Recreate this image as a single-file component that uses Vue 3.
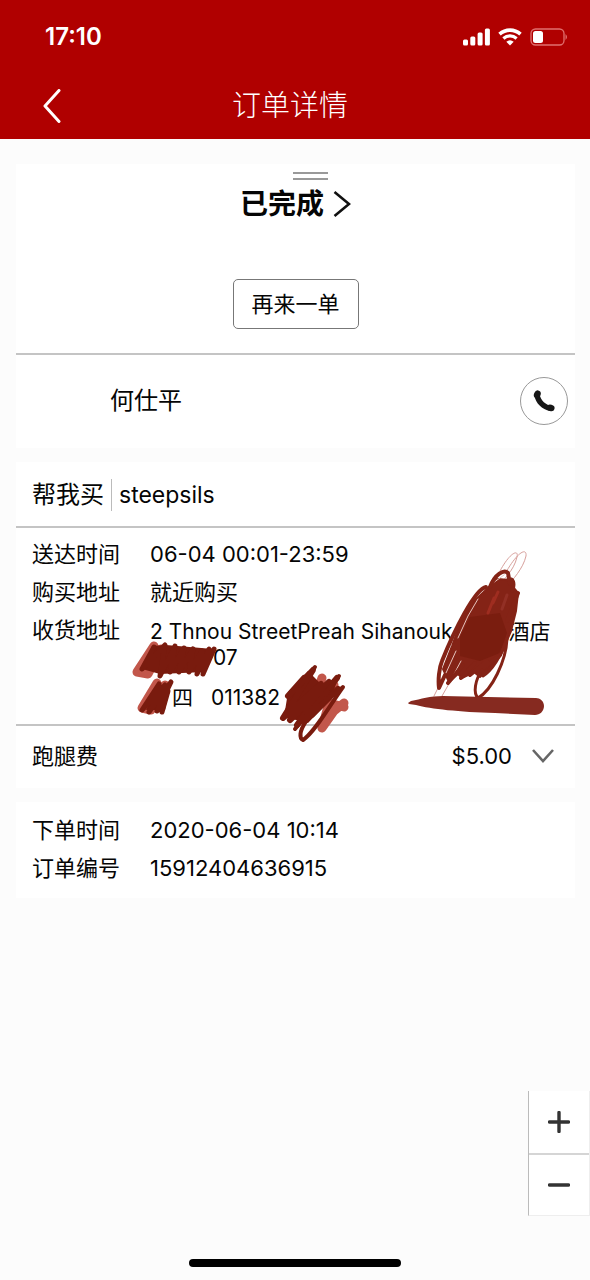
<script setup>
import { ref } from 'vue'

const schedule = [
  { label: '送达时间', value: '06-04 00:01-23:59' },
  { label: '购买地址', value: '就近购买' },
]
const order = [
  { label: '下单时间', value: '2020-06-04 10:14' },
  { label: '订单编号', value: '15912404636915' },
]
const bars = [6, 9, 13, 17]
const zoom = ref(1)
</script>

<template>
  <div class="page">
    <header class="top">
      <div class="status">
        <span class="clock">17:10</span>
        <svg class="signal" viewBox="0 0 28 18" aria-hidden="true">
          <rect v-for="(h, i) in bars" :key="i" :x="i * 7.3" :y="17.5 - h" width="5" :height="h" rx="1.5" fill="#fff" />
        </svg>
        <svg class="wifi" viewBox="0 0 24 18" aria-hidden="true">
          <g fill="none" stroke="#fff">
            <path d="M1.500 6.200C7.500 .7 16.500 .7 22.500 6.200" stroke-width="3.600" />
            <path d="M5.400 10.500C9.200 7.100 14.800 7.100 18.600 10.500" stroke-width="3.200" />
          </g>
          <path d="M8.300 13.800Q12 10.800 15.700 13.800L12 17.600Z" fill="#fff" />
        </svg>
        <svg class="battery" viewBox="0 0 38 18" aria-hidden="true">
          <rect x="1" y="1" width="33" height="16" rx="4.500" fill="none" stroke="#e0706f" stroke-width="1.300" />
          <rect x="3" y="3" width="10" height="12" rx="2.500" fill="#fff" />
          <path d="M35.500 6Q38.500 9 35.500 12Z" fill="#e0706f" />
        </svg>
      </div>
      <nav class="bar">
        <button class="back" type="button" aria-label="返回">
          <svg viewBox="0 0 20 34"><path d="M17 1.500L3 17L17 32.500" fill="none" stroke="#fff" stroke-width="3" stroke-linecap="round" stroke-linejoin="round" /></svg>
        </button>
        <h1>订单详情</h1>
      </nav>
    </header>

    <main>
      <section class="card">
        <div class="state">
          <div class="grip"></div>
          <a class="done" href="#">
            已完成
            <svg viewBox="0 0 18 26"><path d="M1.500 1L16 13L1.500 25" fill="none" stroke="#111" stroke-width="2.600" /></svg>
          </a>
          <button class="again" type="button">再来一单</button>
        </div>
        <div class="courier">
          <span>何仕平</span>
          <button class="call" type="button" aria-label="拨打电话">
            <svg viewBox="0 0 24 24"><g fill="#171717"><path d="M2.500 7C3.500 14 10 20.500 18 22L20 17.500C14 16 8.500 11.500 7.500 5Z" /><ellipse cx="5.300" cy="5.300" rx="3.300" ry="4" transform="rotate(25 5.300 5.300)" /><ellipse cx="18.700" cy="18.900" rx="3.900" ry="3.200" transform="rotate(15 18.700 18.900)" /></g></svg>
          </button>
        </div>
      </section>

      <section class="card">
        <div class="shop">
          <h2>帮我买</h2>
          <span>steepsils</span>
        </div>
        <div class="details">
          <dl>
            <div v-for="row in schedule" :key="row.label" class="row">
              <dt>{{ row.label }}</dt>
              <dd>{{ row.value }}</dd>
            </div>
            <div class="row address">
              <dt>收货地址</dt>
              <dd>
                <p>2 Thnou StreetPreah Sihanouk<i class="gap-hotel"></i>酒店</p>
                <p><i class="gap-room"></i>07</p>
                <p class="contact"><i class="gap-name"></i>四<span>011382</span></p>
              </dd>
            </div>
          </dl>
          <svg class="ink" viewBox="16 527 559 223" aria-hidden="true">
            <g fill="none" stroke-linecap="round" stroke-linejoin="round">
              <g stroke="#c2574b" stroke-width="9">
                <path d="M154 645L137 671L148 673L161 648" />
                <path d="M157 682L142 707L151 709L165 684" />
                <path d="M322 677L314 700M334 684L318 704M344 702L334 710L322 727L329 702L344 706" />
              </g>
              <path d="M152 645L166 644L213 648L204 671L160 673L142 668Z" fill="#791b0e" />
              <path d="M158 683L170 686L165 709L146 709Z" fill="#791b0e" />
              <path d="M308 670L322 684L337 680L331 698L308 722L284 716L288 691Z" fill="#791b0e" />
              <g stroke="#791b0e">
                <path stroke-width="5" d="M154 646L142 668L165 644L160 675L175 645L170 671L184 647L179 671L193 648L189 671L202 650L197 673L209 648L203 673L214 648" />
                <path stroke-width="5" d="M159 683L142 709L165 684L149 711L171 681L157 710L168 690L162 711" />
                <path stroke-width="6" d="M304 677L288 695L313 669L283 717L321 683L290 719L329 681L297 724L337 677L304 720L338 688L312 714" />
                <path stroke-width="4" d="M315 666L300 685M339 675L295 728M343 686C330 704 315 731 303 739C295 735 305 712 342 687" />
              </g>
              <path d="M500 570C510 551 519 548 517 556C514 570 502 580 496 588M505 573C517 551 527 546 526 555C523 568 513 578 506 587M438 687L434 695M450 681L442 695" stroke="#d79f9b" stroke-width="1" />
              <path d="M488 587L498 578L509 579L513 586L518 592L516 610L511 630L501 654L489 668L480 676L474 671L462 677L458 673L449 681L443 668L452 645L461 620L471 603Z" fill="#842316" stroke="#842316" stroke-width="2" />
              <path d="M470 616L500 612L507 632L500 652L480 660L460 655L460 636Z" fill="#7a1d0f" />
              <path d="M494 597L488 612M498 591L493 602" stroke="#9f2d20" stroke-width="3" />
              <path d="M507 594L502 608" stroke="#923025" stroke-width="3" />
              <path d="M478 598L468 615L458 637M456 650L446 672M461 660L453 675M504 574L493 582" stroke="#e6c3bd" stroke-width="1" />
              <path d="M486 586C475 588 454 630 442 660C439 667 438 679 439 687L445 674M448 682L463 664M461 677L475 662M470 674L487 660M480 670L500 654M490 586C495 573 504 568 508 572L510 583M508 579C513 576 515 583 512 590M518 592L507 620" stroke="#842316" stroke-width="4" />
              <path d="M482 669C475 679 473 692 478 697C492 689 506 660 507 638C500 657 491 670 483 675" stroke="#842316" stroke-width="3" />
            </g>
            <path d="M408 702L411 700C421 698 430 695 443 695L536 697C540 697 544 700 544 705C544 710 540 714 535 714L495 712C459 711 431 708 416 704L409 703Z" fill="#862a20" />
          </svg>
        </div>
        <div class="fee">
          <span>跑腿费</span>
          <span class="price">$5.00</span>
          <button class="more" type="button" aria-label="展开">
            <svg viewBox="0 0 22 14"><path d="M1 1L11 12L21 1" fill="none" stroke="#666" stroke-width="2.600" /></svg>
          </button>
        </div>
      </section>

      <section class="card order">
        <dl>
          <div v-for="row in order" :key="row.label" class="row">
            <dt>{{ row.label }}</dt>
            <dd>{{ row.value }}</dd>
          </div>
        </dl>
      </section>
    </main>

    <div class="zoom">
      <button type="button" aria-label="放大" @click="zoom++">
        <svg viewBox="0 0 22 22"><path d="M1.500 11H20.500M11 1.500V20.500" stroke="#333" stroke-width="3.400" stroke-linecap="round" /></svg>
      </button>
      <button type="button" aria-label="缩小" @click="zoom--">
        <svg viewBox="0 0 22 22"><path d="M1.500 11H20.500" stroke="#333" stroke-width="3.400" stroke-linecap="round" /></svg>
      </button>
    </div>
    <div class="home"></div>
  </div>
</template>

<style>
body {
  background: #fcfcfc;
}
</style>

<style scoped>
.page {
  display: flex;
  flex-direction: column;
  min-height: 100vh;
  background: #fcfcfc;
  color: #050505;
  font: 22px/38px Inter, "Noto Sans CJK SC", sans-serif;
}
.page * {
  box-sizing: border-box;
}
h1, h2, dl, dd, p {
  margin: 0;
}
button {
  display: flex;
  align-items: center;
  justify-content: center;
  padding: 0;
  border: 0;
  background: none;
  color: inherit;
  font: inherit;
}
svg {
  display: block;
}
.top {
  background: #b00000;
  color: #fff;
}
.status {
  display: flex;
  align-items: center;
  height: 73px;
  padding: 0 22px 0 45px;
}
.clock {
  margin-right: auto;
  font-size: 24px;
  font-weight: 600;
}
.signal {
  width: 28px;
  height: 18px;
}
.wifi {
  width: 24px;
  height: 18px;
  margin: 0 8px 0 7px;
}
.battery {
  width: 38px;
  height: 18px;
}
.bar {
  display: grid;
  grid-template-columns: 80px 1fr 80px;
  align-items: center;
  height: 66px;
  padding-right: 10px;
}
.back {
  height: 44px;
  padding-left: 24px;
}
.back svg {
  width: 20px;
  height: 34px;
}
h1 {
  font-size: 29px;
  font-weight: 300;
  text-align: center;
}
main {
  display: flex;
  flex-direction: column;
  gap: 14px;
  padding: 25px 15px 0 16px;
}
.card {
  background: #fff;
}
.state {
  display: flex;
  flex-direction: column;
  align-items: center;
  height: 191px;
  padding-top: 8px;
  border-bottom: 2px solid #c4c4c4;
}
.grip {
  width: 35px;
  height: 8px;
  margin-left: 30px;
  border: solid #999;
  border-width: 2px 0;
}
.done {
  display: flex;
  align-items: center;
  gap: 9px;
  height: 48px;
  color: #050505;
  font-size: 28px;
  font-weight: 700;
  text-decoration: none;
}
.done svg {
  width: 18px;
  height: 26px;
}
.again {
  width: 126px;
  height: 50px;
  margin-top: 51px;
  border: 1px solid #777;
  border-radius: 5px;
}
.courier {
  display: flex;
  align-items: center;
  justify-content: space-between;
  height: 93px;
  padding: 0 7px 2px 94px;
  font-size: 24px;
}
.call {
  width: 48px;
  height: 48px;
  border: 1px solid #999;
  border-radius: 50%;
}
.call svg {
  width: 24px;
  height: 24px;
}
.shop {
  display: flex;
  align-items: center;
  height: 66px;
  padding: 2px 16px 0;
  border-bottom: 2px solid #c4c4c4;
  font-size: 23px;
}
h2 {
  font-size: 24px;
  font-weight: 400;
  line-height: 32px;
  padding-right: 7px;
  border-right: 1px solid #bbb;
}
.shop span {
  padding-left: 7px;
}
.details {
  position: relative;
  padding: 7px 16px 8px;
  border-bottom: 2px solid #c4c4c4;
}
.row {
  display: grid;
  grid-template-columns: 118px 1fr;
}
.address dd {
  padding-top: 8px;
  font-size: 21px;
  line-height: 26px;
}
.address p {
  white-space: nowrap;
}
.address i {
  display: inline-block;
  height: 1px;
}
.address .gap-hotel {
  width: 56px;
}
.address .gap-room {
  width: 63px;
}
.address .gap-name {
  width: 22px;
}
.address .contact {
  padding: 14px 0 5px;
}
.contact span {
  margin-left: 18px;
}
.ink {
  position: absolute;
  top: 0;
  left: 0;
  width: 559px;
  height: 223px;
  pointer-events: none;
}
.fee {
  display: flex;
  align-items: center;
  height: 62px;
  padding: 0 21px 2px 16px;
}
.price {
  margin-left: auto;
}
.more {
  margin-left: 20px;
}
.more svg {
  width: 22px;
  height: 14px;
}
.order {
  padding: 9px 16px 11px;
}
.zoom {
  display: flex;
  flex-direction: column;
  align-self: flex-end;
  width: 62px;
  margin-top: auto;
  border: solid #eee;
  border-width: 0 1px 1px;
  border-left-color: #bbb;
  background: #fff;
}
.zoom button {
  height: 62px;
}
.zoom button + button {
  border-top: 2px solid #d5d5d5;
}
.zoom svg {
  width: 22px;
  height: 22px;
}
.home {
  width: 36%;
  height: 8px;
  margin: 43px auto 13px;
  border-radius: 4px;
  background: #000;
}
</style>
